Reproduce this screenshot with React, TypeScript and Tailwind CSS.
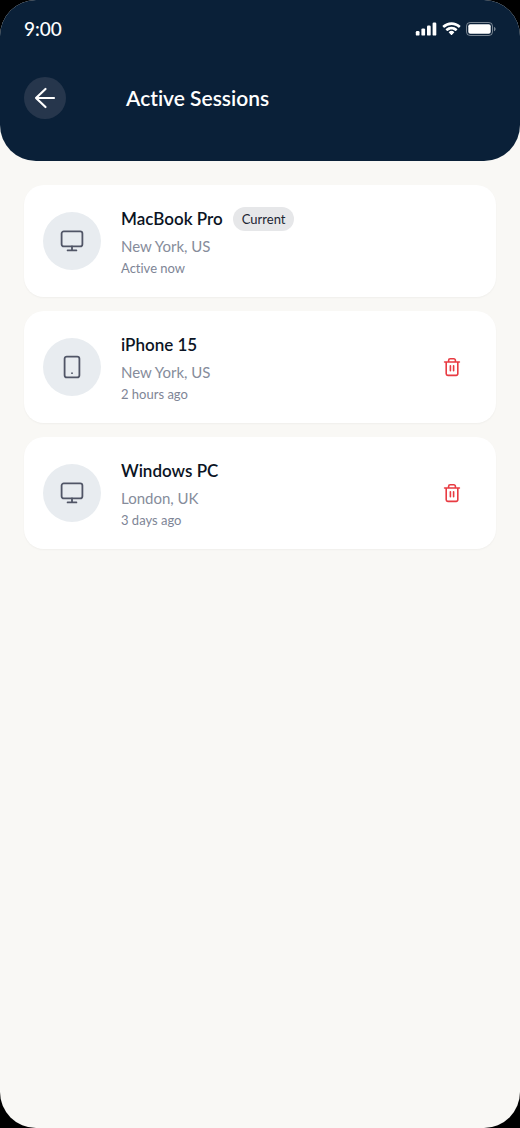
import React from "react";

type Device = "desktop" | "phone";

interface Session {
  name: string;
  place: string;
  seen: string;
  device: Device;
  current?: boolean;
}

const sessions: Session[] = [
  { name: "MacBook Pro", place: "New York, US", seen: "Active now", device: "desktop", current: true },
  { name: "iPhone 15", place: "New York, US", seen: "2 hours ago", device: "phone" },
  { name: "Windows PC", place: "London, UK", seen: "3 days ago", device: "desktop" },
];

const stroke = {
  fill: "none",
  stroke: "currentColor",
  strokeLinecap: "round" as const,
  strokeLinejoin: "round" as const,
};

function DeviceIcon({ device }: { device: Device }) {
  return (
    <svg className="size-6" viewBox="0 0 24 24" strokeWidth="1.8" aria-hidden="true" {...stroke}>
      {device === "desktop" ? (
        <>
          <rect x="1.6" y="2.4" width="20.8" height="15" rx="2.2" />
          <path d="M12 17.4v4M7.6 21.4h8.8" />
        </>
      ) : (
        <>
          <rect x="4.6" y="1.6" width="14.8" height="20.8" rx="2.2" />
          <path d="M12 18.2h.01" />
        </>
      )}
    </svg>
  );
}

function TrashIcon() {
  return (
    <svg className="size-5" viewBox="0 0 20 20" strokeWidth="1.6" aria-hidden="true" {...stroke}>
      <path d="M2.6 5h14.8M4.2 5v11.8a1.6 1.6 0 0 0 1.6 1.6h8.4a1.6 1.6 0 0 0 1.6-1.6V5M6.6 5V3.4a1.6 1.6 0 0 1 1.6-1.6h3.6a1.6 1.6 0 0 1 1.6 1.6V5M8.4 8.8v5M11.6 8.8v5" />
    </svg>
  );
}

function StatusBar() {
  return (
    <div className="flex h-6 items-center justify-between">
      <time className="text-[19px] leading-6 font-medium">9:00</time>
      <div className="flex items-center gap-[5px]">
        <svg width="22" height="14" viewBox="0 0 22 14" fill="currentColor" aria-hidden="true">
          <rect x="0.8" y="9" width="3.7" height="4.6" rx="1.2" />
          <rect x="6.4" y="6.4" width="3.7" height="7.2" rx="1.2" />
          <rect x="12" y="3.6" width="3.7" height="10" rx="1.2" />
          <rect x="17.6" y="0.5" width="3.7" height="13.1" rx="1.2" />
        </svg>
        <svg width="19" height="14" viewBox="0 0 17 12" fill="currentColor" aria-hidden="true">
          <path d="M8.5 2.4c2.4 0 4.6.9 6.3 2.5.1.1.3.1.5 0l1.2-1.3c.1-.1.1-.4 0-.5a11.5 11.5 0 0 0-16 0c-.1.1-.1.4 0 .5l1.2 1.3c.2.1.4.1.5 0a9.2 9.2 0 0 1 6.3-2.5z" />
          <path d="M8.5 6.4c1.3 0 2.5.5 3.5 1.4.1.1.3.1.5 0l1.2-1.3c.1-.1.1-.3 0-.5a7.6 7.6 0 0 0-10.4 0c-.1.2-.1.4 0 .5l1.2 1.3c.2.1.4.1.5 0 1-.9 2.2-1.4 3.5-1.4z" />
          <path d="M10.9 9.2c.1-.1.1-.3 0-.5a3.700 3.700 0 0 0-4.800 0c-.1.2-.1.4 0 .5l2.1 2.1c.2.2.4.2.6 0z" />
        </svg>
        <svg width="30" height="14" viewBox="0 0 30 14" aria-hidden="true">
          <rect x="0.5" y="0.5" width="26" height="13" rx="3.6" fill="none" stroke="white" strokeOpacity="0.45" />
          <rect x="2.3" y="2.3" width="22.4" height="9.4" rx="2" fill="white" />
          <path d="M28 4.7c1 .4 1.600 1.300 1.600 2.300S29 8.900 28 9.300z" fill="white" fillOpacity="0.45" />
        </svg>
      </div>
    </div>
  );
}

function SessionCard({ session }: { session: Session }) {
  return (
    <li className="flex items-center gap-5 rounded-[20px] bg-white px-[19px] py-[19px] shadow-[0_1px_2px_rgba(0,0,0,0.04)]">
      <div className="flex size-[58px] shrink-0 items-center justify-center rounded-full bg-[#e8ecf0] text-[#505566]">
        <DeviceIcon device={session.device} />
      </div>
      <div className="min-w-0 grow">
        <div className="flex items-center gap-2.5">
          <h2 className="text-[17px] leading-[30px] font-semibold text-[#0b1424]">{session.name}</h2>
          {session.current && (
            <span className="rounded-full bg-[#e6e7e9] px-[9px] text-[13px] leading-6 text-[#1b2432]">Current</span>
          )}
        </div>
        <p className="text-[15px] leading-6 text-[#868c9b]">{session.place}</p>
        <p className="text-[13px] leading-5 text-[#7e8596]">{session.seen}</p>
      </div>
      {!session.current && (
        <button type="button" aria-label={`Remove ${session.name}`} className="mr-[9px] p-1.5 text-[#e83b42]">
          <TrashIcon />
        </button>
      )}
    </li>
  );
}

export default function App() {
  return (
    <div className="min-h-screen bg-black font-['Lato','Noto_Sans',sans-serif] [font-variant-ligatures:none]">
      <div className="min-h-screen overflow-hidden rounded-[36px] bg-[#f9f8f5]">
        <header className="rounded-b-[36px] bg-[#0a2038] px-6 pt-[17px] pb-[42px] text-white">
          <StatusBar />
          <div className="flex items-center gap-15 pt-9">
            <button
              type="button"
              aria-label="Back"
              className="flex size-[42px] items-center justify-center rounded-full bg-[#26364c]"
            >
              <svg className="size-6" viewBox="0 0 24 24" strokeWidth="2.2" aria-hidden="true" {...stroke}>
                <path d="M21 12H3M12.5 3 3 12l9.5 9" />
              </svg>
            </button>
            <h1 className="text-[21px] leading-7 font-semibold">Active Sessions</h1>
          </div>
        </header>
        <main>
          <ul className="flex flex-col gap-3.5 px-6 py-6">
            {sessions.map((session) => (
              <SessionCard key={session.name} session={session} />
            ))}
          </ul>
        </main>
      </div>
    </div>
  );
}
